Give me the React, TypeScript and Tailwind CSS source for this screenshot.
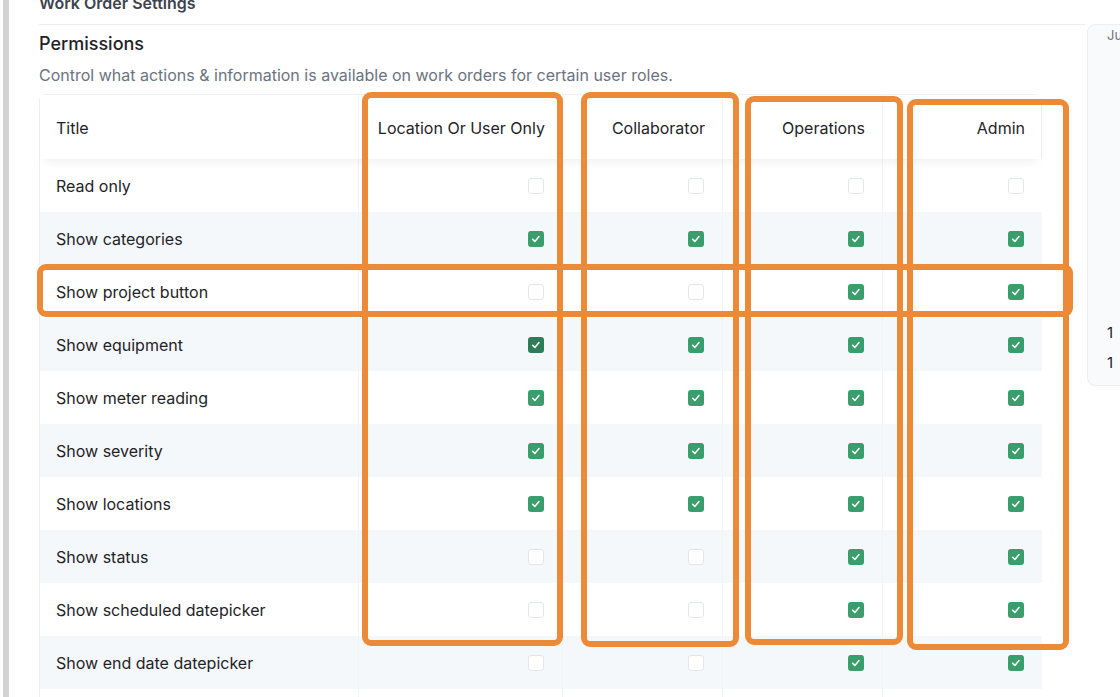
import { Fragment } from 'react';

type Row = { title: string; values: boolean[] };

const columns = ['Location Or User Only', 'Collaborator', 'Operations', 'Admin'];

const rows: Row[] = [
  { title: 'Read only', values: [false, false, false, false] },
  { title: 'Show categories', values: [true, true, true, true] },
  { title: 'Show project button', values: [false, false, true, true] },
  { title: 'Show equipment', values: [true, true, true, true] },
  { title: 'Show meter reading', values: [true, true, true, true] },
  { title: 'Show severity', values: [true, true, true, true] },
  { title: 'Show locations', values: [true, true, true, true] },
  { title: 'Show status', values: [false, false, true, true] },
  { title: 'Show scheduled datepicker', values: [false, false, true, true] },
  { title: 'Show end date datepicker', values: [false, false, true, true] },
  { title: '', values: [false, false, false, false] },
];

// highlight frames drawn on top of the table
const frames = [
  'left-[362px] top-[92px] w-[201px] h-[554px]',
  'left-[581px] top-[92px] w-[158px] h-[555px]',
  'left-[745px] top-[96px] w-[158px] h-[549px]',
  'left-[907px] top-[99px] w-[162px] h-[551px]',
  'left-[37px] top-[264px] w-[1036px] h-[53px]',
];

const grid = 'grid grid-cols-[318px_204px_160px_160px_160px]';

function Checkbox({ checked, dark }: { checked: boolean; dark?: boolean }) {
  if (!checked) {
    return <span className="block w-[16px] h-[16px] rounded-[3px] border border-[#e3e6ea] bg-white" />;
  }
  return (
    <span
      className={`flex items-center justify-center w-[16px] h-[16px] rounded-[3px] ${dark ? 'bg-[#2f7d58]' : 'bg-[#3a9e6c]'}`}
    >
      <svg viewBox="0 0 16 16" className="w-[12px] h-[12px]" fill="none">
        <path d="M3.5 8.4l3 2.8 5.5-6.4" stroke="white" strokeWidth={2} strokeLinecap="round" strokeLinejoin="round" />
      </svg>
    </span>
  );
}

export default function App() {
  return (
    <div className="relative w-[1120px] h-[697px] overflow-hidden bg-white flex font-['Inter','Liberation_Sans',sans-serif] text-[#1f2328]">
      <div className="ml-[3px] w-[6px] shrink-0 bg-[#d3d3d3]" />

      <div className="w-[1076px] shrink-0 pl-[30px]">
        <div className="-mt-[9px] pb-[9px] border-b border-[#eceef1] text-[16px] leading-[24px] font-semibold text-[#3b4350]">
          Work Order Settings
        </div>
        <h2 className="mt-[5px] text-[18px] leading-[28px] font-medium">Permissions</h2>
        <p className="mt-[5px] text-[16px] leading-[24px] text-[#6b7380]">
          Control what actions &amp; information is available on work orders for certain user roles.
        </p>

        <div className="mt-[7px] w-[1003px] border border-[#eef0f3] rounded-t-[6px]">
          <div className={`${grid} relative z-10 bg-white shadow-[0_6px_10px_-4px_rgba(0,0,0,0.07)]`}>
            <div className="h-[64px] flex items-center pl-[16px] pt-[1px] text-[16px]">Title</div>
            {columns.map((c) => (
              <div key={c} className="h-[64px] flex items-center justify-end pr-[17px] pt-[1px] text-[16px] border-l border-[#f3f4f6]">
                {c}
              </div>
            ))}
          </div>

          <div className={grid}>
            {rows.map((r, i) => {
              const bg = i % 2 === 1 ? 'bg-[#f5f8fb]' : 'bg-white';
              return (
                <Fragment key={i}>
                  <div className={`h-[53px] flex items-center pl-[16px] text-[16px] ${bg}`}>{r.title}</div>
                  {r.values.map((v, j) => (
                    <div key={j} className={`h-[53px] flex items-center justify-end pr-[18px] border-l border-[#f1f3f5] ${bg}`}>
                      {r.title && <Checkbox checked={v} dark={i === 3 && j === 0} />}
                    </div>
                  ))}
                </Fragment>
              );
            })}
          </div>
        </div>
      </div>

      <div className="mt-[24px] ml-[2px] w-[60px] h-[362px] shrink-0 rounded-l-[8px] border border-[#eceef1] bg-[#f9fafb] pl-[19px] pt-[1px] text-[13px]">
        <div className="text-[#6b7380] leading-[18px]">Ju</div>
        <div className="mt-[274px] text-[15px] leading-[30px] text-[#1f2328]">1</div>
        <div className="text-[15px] leading-[30px] text-[#1f2328]">1</div>
      </div>

      {frames.map((f) => (
        <div key={f} className={`absolute z-20 ${f} border-[6px] border-[#ec8a37] rounded-[9px] pointer-events-none`} />
      ))}
    </div>
  );
}
